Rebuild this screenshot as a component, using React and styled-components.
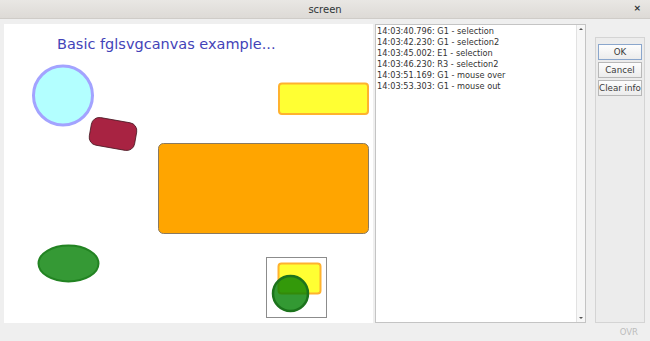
import React from 'react';
import styled, { createGlobalStyle } from 'styled-components';

const GlobalStyle = createGlobalStyle`
  html, body {
    margin: 0;
    padding: 0;
    background: #efefef;
  }
  body {
    font-family: "DejaVu Sans", "Noto Sans", sans-serif;
  }
`;

const Window = styled.div`
  width: 650px;
  height: 341px;
  display: flex;
  flex-direction: column;
  background: #efefef;
  overflow: hidden;
`;

const TitleBar = styled.div`
  height: 19px;
  flex: 0 0 19px;
  box-sizing: border-box;
  display: flex;
  align-items: center;
  justify-content: center;
  position: relative;
  background: linear-gradient(#e9e7e4, #dddad6);
  border-bottom: 1px solid #cfccc8;
  font-size: 10px;
  color: #2e3436;
`;

const CloseButton = styled.span`
  position: absolute;
  right: 9px;
  top: 3px;
  font-size: 9px;
  font-weight: bold;
  color: #2e3436;
`;

const Body = styled.div`
  flex: 1;
  display: flex;
  padding: 5px 5px 0 4px;
  min-height: 0;
`;

const Canvas = styled.div`
  width: 369px;
  height: 299px;
  background: #ffffff;
  flex: 0 0 auto;
`;

const LogPanel = styled.div`
  margin-left: 2px;
  width: 211px;
  height: 299px;
  box-sizing: border-box;
  background: #ffffff;
  border: 1px solid #c4c4c4;
  display: flex;
`;

const LogText = styled.div`
  flex: 1;
  padding: 1px 0 0 1px;
  font-size: 8.2px;
  line-height: 11px;
  color: #333333;
  white-space: pre;
`;

const ScrollBar = styled.div`
  width: 8px;
  border-left: 1px solid #e2e2e2;
  background: #f7f7f7;
  display: flex;
  flex-direction: column;
  justify-content: space-between;
  align-items: center;
  padding: 3px 0;
`;

const Arrow = styled.div`
  width: 0;
  height: 0;
  border-left: 2px solid transparent;
  border-right: 2px solid transparent;
  ${(p) => (p.$down ? 'border-top: 2px solid #555;' : 'border-bottom: 2px solid #555;')}
`;

const ButtonPanel = styled.div`
  margin-left: 9px;
  margin-top: 13px;
  width: 50px;
  height: 286px;
  box-sizing: border-box;
  border: 1px solid #d4d4d4;
  background: #ececec;
  display: flex;
  flex-direction: column;
  align-items: center;
  gap: 2px;
  padding-top: 6px;
`;

const Button = styled.div`
  width: 44px;
  height: 16px;
  box-sizing: border-box;
  border: 1px solid ${(p) => (p.$default ? '#8aa6cc' : '#b8b8b8')};
  background: linear-gradient(#fdfdfd, #ececec);
  display: flex;
  align-items: center;
  justify-content: center;
  font-size: 8.7px;
  color: #3a3a3a;
  white-space: nowrap;
`;

const StatusBar = styled.div`
  height: 18px;
  flex: 0 0 18px;
  display: flex;
  align-items: center;
  justify-content: flex-end;
  padding-right: 12px;
  font-size: 8.5px;
  color: #bcbcbc;
`;

const logLines = [
  '14:03:40.796: G1 - selection',
  '14:03:42.230: G1 - selection2',
  '14:03:45.002: E1 - selection',
  '14:03:46.230: R3 - selection2',
  '14:03:51.169: G1 - mouse over',
  '14:03:53.303: G1 - mouse out',
];

const Drawing = () => (
  <svg width="369" height="299" viewBox="4 24 369 299">
    <text
      x="57"
      y="49"
      fill="#4343b8"
      fontFamily="DejaVu Sans, sans-serif"
      fontSize="14.5"
    >
      Basic fglsvgcanvas example...
    </text>
    <circle cx="63" cy="95.5" r="29.5" fill="#b3ffff" stroke="#a3a3ff" strokeWidth="3" />
    <rect
      x="90"
      y="120"
      width="46"
      height="28"
      rx="8"
      fill="#a82342"
      stroke="#4a1a24"
      strokeWidth="0.8"
      transform="rotate(10 113 134)"
    />
    <rect x="279" y="83.5" width="89" height="30.5" rx="3" fill="#ffff33" stroke="#ffb22e" strokeWidth="2" />
    <rect x="158.5" y="143.5" width="210" height="90" rx="5" fill="#ffa500" stroke="#8a7a60" strokeWidth="1" />
    <ellipse cx="68.5" cy="263.5" rx="30" ry="18" fill="#359935" stroke="#228322" strokeWidth="2" />
    <rect x="266.5" y="257.5" width="60" height="60" fill="#ffffff" stroke="#8c8c8c" strokeWidth="1" />
    <rect x="278.5" y="263.5" width="42" height="30" rx="3" fill="#ffff33" stroke="#ffb22e" strokeWidth="2" />
    <circle
      cx="290.5"
      cy="293.5"
      r="17.5"
      fill="rgba(0, 128, 0, 0.8)"
      stroke="#1c731c"
      strokeWidth="2.5"
    />
  </svg>
);

export default function App() {
  return (
    <>
      <GlobalStyle />
      <Window>
        <TitleBar>
          screen
          <CloseButton>×</CloseButton>
        </TitleBar>
        <Body>
          <Canvas>
            <Drawing />
          </Canvas>
          <LogPanel>
            <LogText>{logLines.join('\n')}</LogText>
            <ScrollBar>
              <Arrow />
              <Arrow $down />
            </ScrollBar>
          </LogPanel>
          <ButtonPanel>
            <Button $default>OK</Button>
            <Button>Cancel</Button>
            <Button>Clear info</Button>
          </ButtonPanel>
        </Body>
        <StatusBar>OVR</StatusBar>
      </Window>
    </>
  );
}
